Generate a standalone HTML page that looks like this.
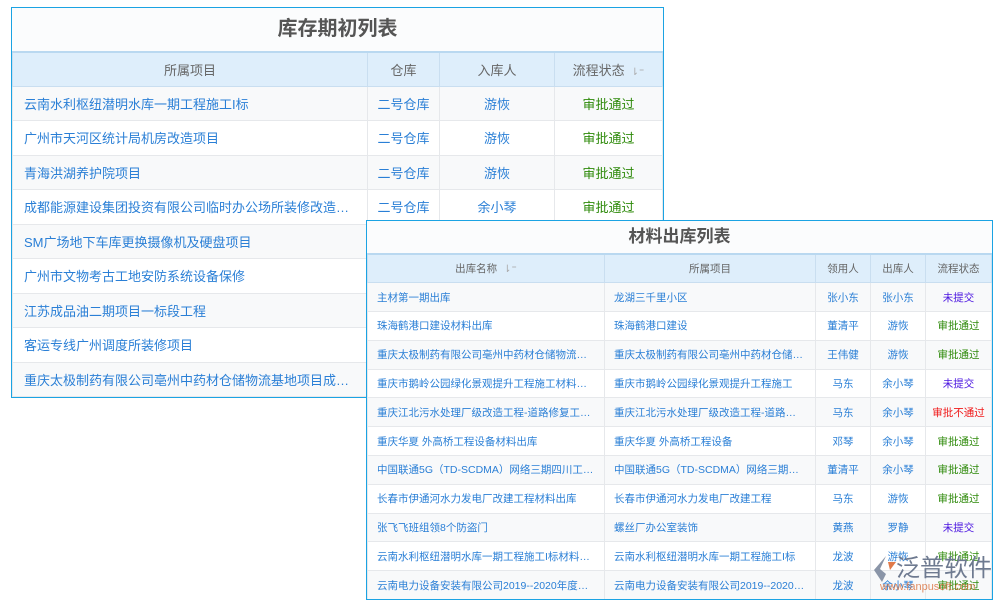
<!DOCTYPE html>
<html><head><meta charset="utf-8"><style>
*{margin:0;padding:0;box-sizing:border-box}
body{width:1000px;height:600px;background:#fff;position:relative;overflow:hidden;font-family:"Liberation Sans","Noto Sans CJK SC",sans-serif}
.box{position:absolute;border:1px solid #1ba3e3;background:#fbfcfd;overflow:hidden}
.title{text-align:center;font-weight:bold;color:#555;background:#fbfcfd}
table{border-collapse:collapse;table-layout:fixed;width:100%}
th{background:#deeefb;color:#666;font-weight:normal;border:1px solid #c9def0;border-top:2px solid #b9d8f0}
td{border:1px solid #e6e8eb;color:#2a7fd6;white-space:nowrap;overflow:hidden;text-overflow:ellipsis}
tr:nth-child(even) td{background:#f8f9fa}
tr:nth-child(odd) td{background:#fff}
td.c{text-align:center;padding:0 2px!important}
.g{color:#2e8a0a!important}.p{color:#4a14e0!important}.r{color:#f01a1a!important}
#t1 td,#t1 th{height:34.5px;font-size:13px}
#t1 td{padding:0 11px}
#t1 th{height:34px}
#t2 td,#t2 th{height:28.8px;font-size:10.5px}
#t2 td{padding:0 9px}
.sort{display:inline-block;color:#aaa;font-size:10px;margin-left:6px}
</style></head><body>
<div class="box" style="left:11px;top:7px;width:653px;height:391px;box-shadow:inset 0 0 0 1px #1ba3e3">
<div class="title" style="height:43px;line-height:43px;font-size:20px">库存期初列表</div>
<table id="t1"><colgroup><col style="width:355px"><col style="width:72px"><col style="width:115px"><col></colgroup>
<tr><th>所属项目</th><th>仓库</th><th>入库人</th><th>流程状态<span class="sort">⇂⁼</span></th></tr>
<tr><td>云南水利枢纽潜明水库一期工程施工I标</td><td class="c">二号仓库</td><td class="c">游恢</td><td class="c g">审批通过</td></tr>
<tr><td>广州市天河区统计局机房改造项目</td><td class="c">二号仓库</td><td class="c">游恢</td><td class="c g">审批通过</td></tr>
<tr><td>青海洪湖养护院项目</td><td class="c">二号仓库</td><td class="c">游恢</td><td class="c g">审批通过</td></tr>
<tr><td>成都能源建设集团投资有限公司临时办公场所装修改造工程项目</td><td class="c">二号仓库</td><td class="c">余小琴</td><td class="c g">审批通过</td></tr>
<tr><td>SM广场地下车库更换摄像机及硬盘项目</td><td></td><td></td><td></td></tr>
<tr><td>广州市文物考古工地安防系统设备保修</td><td></td><td></td><td></td></tr>
<tr><td>江苏成品油二期项目一标段工程</td><td></td><td></td><td></td></tr>
<tr><td>客运专线广州调度所装修项目</td><td></td><td></td><td></td></tr>
<tr><td>重庆太极制药有限公司亳州中药材仓储物流基地项目成品仓库工程</td><td></td><td></td><td></td></tr>
</table></div>

<div class="box" style="left:366px;top:220px;width:627px;height:380px">
<div class="title" style="height:32px;line-height:32px;font-size:17px">材料出库列表</div>
<table id="t2"><colgroup><col style="width:237px"><col style="width:211px"><col style="width:55px"><col style="width:55px"><col></colgroup>
<tr><th>出库名称<span class="sort">⇂⁼</span></th><th>所属项目</th><th>领用人</th><th>出库人</th><th>流程状态</th></tr>
<tr><td>主材第一期出库</td><td>龙湖三千里小区</td><td class="c">张小东</td><td class="c">张小东</td><td class="c p">未提交</td></tr>
<tr><td>珠海鹤港口建设材料出库</td><td>珠海鹤港口建设</td><td class="c">董清平</td><td class="c">游恢</td><td class="c g">审批通过</td></tr>
<tr><td>重庆太极制药有限公司亳州中药材仓储物流基地项目</td><td>重庆太极制药有限公司亳州中药材仓储物流基地</td><td class="c">王伟健</td><td class="c">游恢</td><td class="c g">审批通过</td></tr>
<tr><td>重庆市鹅岭公园绿化景观提升工程施工材料出库</td><td>重庆市鹅岭公园绿化景观提升工程施工</td><td class="c">马东</td><td class="c">余小琴</td><td class="c p">未提交</td></tr>
<tr><td>重庆江北污水处理厂级改造工程-道路修复工程材料</td><td>重庆江北污水处理厂级改造工程-道路修复工程</td><td class="c">马东</td><td class="c">余小琴</td><td class="c r">审批不通过</td></tr>
<tr><td>重庆华夏 外高桥工程设备材料出库</td><td>重庆华夏 外高桥工程设备</td><td class="c">邓琴</td><td class="c">余小琴</td><td class="c g">审批通过</td></tr>
<tr><td>中国联通5G（TD-SCDMA）网络三期四川工程材料</td><td>中国联通5G（TD-SCDMA）网络三期四川工程</td><td class="c">董清平</td><td class="c">余小琴</td><td class="c g">审批通过</td></tr>
<tr><td>长春市伊通河水力发电厂改建工程材料出库</td><td>长春市伊通河水力发电厂改建工程</td><td class="c">马东</td><td class="c">游恢</td><td class="c g">审批通过</td></tr>
<tr><td>张飞飞班组领8个防盗门</td><td>螺丝厂办公室装饰</td><td class="c">黄燕</td><td class="c">罗静</td><td class="c p">未提交</td></tr>
<tr><td>云南水利枢纽潜明水库一期工程施工I标材料出库</td><td>云南水利枢纽潜明水库一期工程施工I标</td><td class="c">龙波</td><td class="c">游恢</td><td class="c g">审批通过</td></tr>
<tr><td>云南电力设备安装有限公司2019--2020年度劳务材料</td><td>云南电力设备安装有限公司2019--2020年度劳务</td><td class="c">龙波</td><td class="c">余小琴</td><td class="c g">审批通过</td></tr>
</table></div>

<div style="position:absolute;left:868px;top:551px;width:132px;height:46px;white-space:nowrap">
<svg width="30" height="30" viewBox="0 0 30 30" style="position:absolute;left:2px;top:3px"><path d="M16 2 L4 16 L12 28 L16 20 L10 15 Z" fill="#8a95a8"/><path d="M18 8 L26 8 L20 16 Z" fill="#e07a4a"/></svg>
<div style="position:absolute;left:28px;top:0;font-size:24px;color:#6e7a90;font-family:'Noto Sans CJK SC',sans-serif;line-height:30px">泛普软件</div>
<div style="position:absolute;left:12px;top:30px;font-size:11px;color:#d9703c;opacity:.8">www.fanpusoft.com</div>
</div>
</body></html>
